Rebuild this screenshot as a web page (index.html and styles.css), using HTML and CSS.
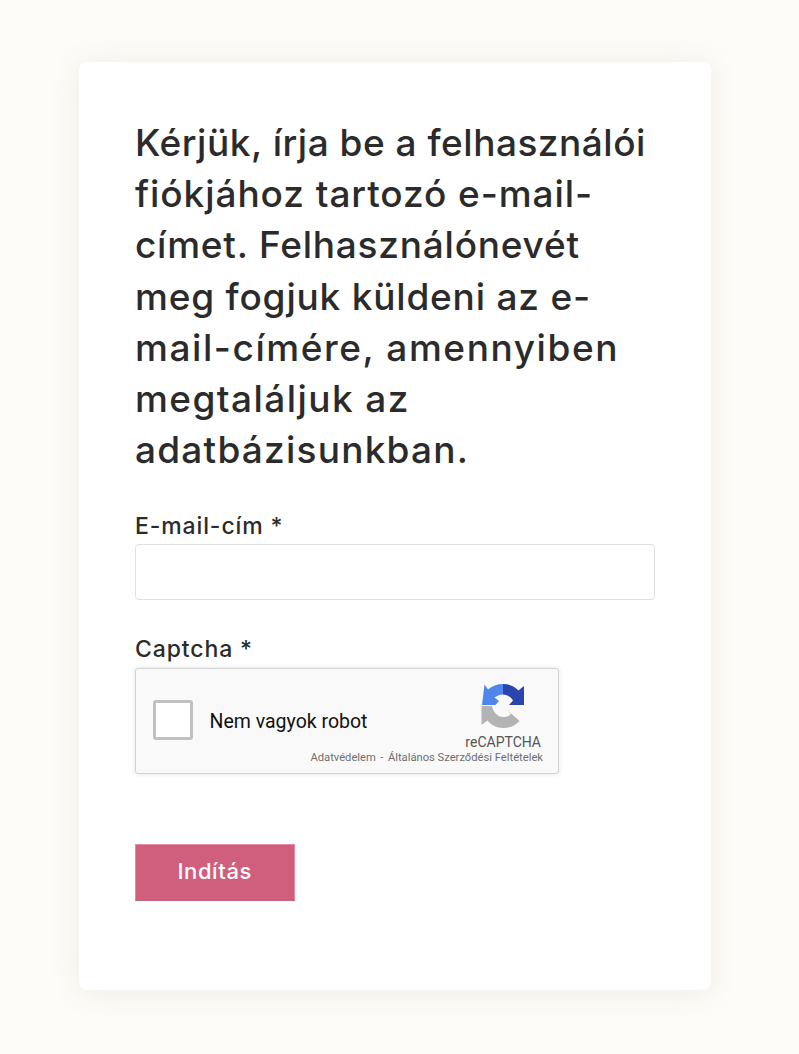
FILE: index.html
```html
<!DOCTYPE html>
<html lang="hu">
<head>
<meta charset="utf-8">
<title>Felhasználónév</title>
<link rel="stylesheet" href="styles.css">
</head>
<body>
<main class="card">
  <h1 class="intro"><span class="line l1">Kérjük, írja be a felhasználói</span> <span class="line l2">fiókjához tartozó e-mail-</span> <span class="line l3">címet. Felhasználónevét</span> <span class="line l4">meg fogjuk küldeni az e-</span> <span class="line l5">mail-címére, amennyiben</span> <span class="line l6">megtaláljuk az</span> <span class="line l7">adatbázisunkban.</span></h1>
  <form class="form">
    <div class="field">
      <label class="label" for="email">E-mail-cím *</label>
      <input class="input" id="email" type="text">
    </div>
    <div class="field captcha-field">
      <span class="label">Captcha *</span>
      <div class="recaptcha">
        <span class="check"></span>
        <span class="robot">Nem vagyok robot</span>
        <div class="brand">
          <svg class="logo" viewBox="0 0 44 44" width="44" height="44" aria-hidden="true">
            <path fill="#4f86ec" d="M22 0C16 0 11 2 7 5.500L3.500 0.500L1 21H14.500L18 17L13.500 13.500C15.500 12 18.500 10.500 22 10.500Z"/>
            <path fill="#2a45ad" d="M22 0C28.500 0 33.500 2.500 37.500 6.500L43 2V21H28L32 16.500C30 13 26 10.500 22 10.500Z"/>
            <path fill="#b3b3b3" d="M0.500 22H11C12 28 16.500 33 22.500 33C25.500 33 28 32 30 30L25.500 25.500L38.500 37C34.500 41.500 29 44 22.500 44C15.500 44 10 41 6.500 36.500L0.500 41Z"/>
          </svg>
          <span class="brand-name">reCAPTCHA</span>
        </div>
        <span class="legal"><span>Adatvédelem</span><span class="sep">-</span><span>Általános Szerződési Feltételek</span></span>
      </div>
    </div>
    <button class="submit" type="button">Indítás</button>
  </form>
</main>
</body>
</html>
```

FILE: styles.css
```css
* { box-sizing: border-box; }
html, body { margin: 0; padding: 0; }
body {
  min-height: 1054px;
  background: #fdfcf8;
  padding: 62px 88px 64px 79px;
  font-family: "Inter", "Liberation Sans", sans-serif;
  color: #2b2b2b;
}
.card {
  width: 632px;
  height: 928px;
  background: #fff;
  border-radius: 8px;
  box-shadow: 0 2px 30px rgba(100, 90, 60, 0.1);
  padding: 55px 56px 56px;
}
.intro {
  margin: 0;
  font-size: 37px;
  line-height: 51.2px;
  font-weight: 500;
  white-space: nowrap;
}
.line { display: block; }
.l1 { letter-spacing: 0.51px; }
.l2 { letter-spacing: 0.93px; }
.l3 { letter-spacing: 0.77px; }
.l4 { letter-spacing: 0.8px; }
.l5 { letter-spacing: 1.57px; }
.l6 { letter-spacing: 1.44px; }
.l7 { letter-spacing: 1.22px; }
.form { display: flex; flex-direction: column; margin-top: 35px; }
.field { display: flex; flex-direction: column; }
.captcha-field { margin-top: 33px; }
.label {
  font-size: 23px;
  line-height: 32px;
  font-weight: 500;
  letter-spacing: 0.88px;
  margin-bottom: 2px;
}
.captcha-field .label { margin-bottom: 3px; }
.input {
  width: 519.5px;
  height: 56px;
  border: 1px solid #e0e0e0;
  border-radius: 4px;
  background: #fff;
}
.recaptcha {
  position: relative;
  width: 423.5px;
  height: 106px;
  background: #f9f9f9;
  border: 1px solid #d3d3d3;
  border-radius: 3px;
  box-shadow: 0 0 4px 1px rgba(0, 0, 0, 0.08);
  font-family: Roboto, sans-serif;
}
.check {
  position: absolute;
  left: 17px;
  top: 31px;
  width: 40px;
  height: 40px;
  background: #fff;
  border: 3px solid #c1c1c1;
  border-radius: 3px;
}
.robot {
  position: absolute;
  left: 73.5px;
  top: 41px;
  font-size: 19.5px;
  line-height: 24px;
  color: #111;
}
.brand {
  position: absolute;
  right: 16.5px;
  top: 15px;
  display: flex;
  flex-direction: column;
  align-items: center;
}
.logo { display: block; }
.brand-name { font-size: 14px; line-height: 18px; color: #555; margin-top: 5px; }
.legal {
  position: absolute;
  right: 14.5px;
  bottom: 8px;
  display: flex;
  font-size: 11.2px;
  line-height: 14px;
  color: #6f6f6f;
  white-space: nowrap;
}
.sep { margin: 0 4.5px; }
.submit {
  margin-top: 70px;
  width: 159.5px;
  height: 57px;
  padding: 0 0 3px;
  background: #d05f7e;
  border: 1px solid #e58aa3;
  border-bottom-color: #c9607d;
  color: #fff;
  font-family: inherit;
  font-size: 22px;
  font-weight: 500;
  letter-spacing: 0.6px;
}
```
